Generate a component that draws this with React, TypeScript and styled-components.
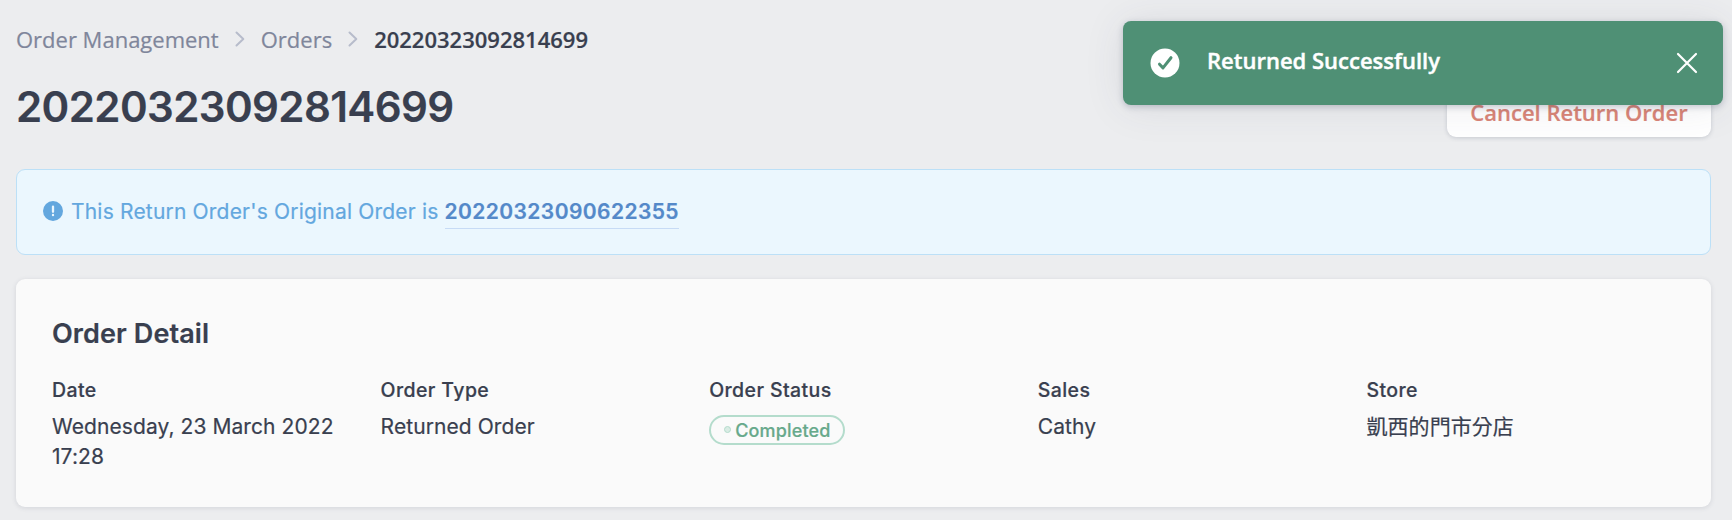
import React from "react";
import styled, { createGlobalStyle } from "styled-components";

const GlobalStyle = createGlobalStyle`
  *, *::before, *::after { box-sizing: border-box; }
  body {
    margin: 0;
    background: #ecedef;
    color: #393f4f;
    font-family: Inter, "Noto Sans CJK TC", sans-serif;
    -webkit-font-smoothing: antialiased;
    -webkit-text-stroke: 0.2px;
  }
`;

const Page = styled.main`
  position: relative;
  height: 520px;
  padding: 24px 21px 0 16px;
  overflow: hidden;
`;

const Breadcrumb = styled.nav`
  display: flex;
  align-items: center;
  height: 30px;
  font: 400 22px/30px "Open Sans", sans-serif;
`;

const Crumb = styled.span<{ $current?: boolean }>`
  color: ${(p) => (p.$current ? "#393f4f" : "#7f869b")};
  font-weight: ${(p) => (p.$current ? 600 : 400)};
  white-space: nowrap;
`;

const Separator = styled.svg`
  width: 10px;
  height: 16px;
  margin: 0 16px 1px;
  flex: none;
`;

const Header = styled.header`
  display: flex;
  justify-content: space-between;
  align-items: flex-start;
  height: 115px;
  padding-top: 25px;
`;

const Title = styled.h1`
  margin: 0;
  font-size: 42px;
  line-height: 56px;
  font-weight: 600;
  letter-spacing: -0.58px;
`;

const CancelButton = styled.button`
  width: 264px;
  height: 56px;
  margin-top: 2px;
  padding: 5px 0 0;
  border: 0;
  border-radius: 9px;
  background: #fff;
  box-shadow: 0 1px 4px rgba(57, 63, 90, 0.2);
  color: #da8577;
  font: 600 22px/30px "Open Sans", sans-serif;
`;

const Notice = styled.section`
  display: flex;
  align-items: center;
  height: 86px;
  padding: 0 26px;
  border: 1px solid #bce0f7;
  border-radius: 9px;
  background: #ebf7fe;
  color: #63a7de;
  font-size: 21px;
  line-height: 30px;
  letter-spacing: 0.19px;
`;

const NoticeIcon = styled.svg`
  width: 20px;
  height: 20px;
  margin: 0 8px 3px 0;
  flex: none;
`;

const OrderLink = styled.a`
  margin: 2px 0 0 6px;
  padding-bottom: 1px;
  border-bottom: 1px solid #c7dbf5;
  color: #5489c9;
  font-weight: 600;
  letter-spacing: 0.42px;
`;

const Card = styled.section`
  height: 228px;
  margin-top: 24px;
  padding: 37px 36px 0;
  border-radius: 9px;
  background: #fafafa;
  box-shadow: 0 1px 5px rgba(57, 63, 90, 0.14);
`;

const CardTitle = styled.h2`
  margin: 0 0 23px;
  font-size: 27px;
  line-height: 36px;
  font-weight: 600;
  letter-spacing: 0.1px;
`;

const Fields = styled.dl`
  display: grid;
  grid-template-columns: repeat(5, 1fr);
  column-gap: 20px;
  margin: 0;
`;

const Label = styled.dt`
  font-size: 19.5px;
  line-height: 30px;
  font-weight: 500;
  letter-spacing: 0.4px;
`;

const Value = styled.dd`
  margin: 7px 0 0;
  font-size: 21px;
  line-height: 30px;
  letter-spacing: 0.08px;
`;

const Status = styled.span`
  display: flex;
  align-items: center;
  width: 136px;
  height: 30px;
  margin-top: 10px;
  padding: 1px 0 0 13px;
  border: 2px solid #b4dccc;
  border-radius: 15px;
  color: #67a98b;
  font-size: 18px;
  font-weight: 500;
  line-height: 26px;
  letter-spacing: 0.15px;
`;

const Dot = styled.i`
  width: 7px;
  height: 7px;
  margin: 0 4px 2px 0;
  border: 1px solid #b4dccc;
  border-radius: 50%;
  background: #d9ece4;
`;

const Toast = styled.div`
  position: absolute;
  top: 21px;
  right: 9px;
  display: flex;
  align-items: center;
  width: 600px;
  height: 84px;
  padding: 0 25px 0 27px;
  border-radius: 8px;
  background: #4f9075;
  box-shadow: 0 2px 6px rgba(57, 63, 90, 0.25), 0 2px 40px rgba(57, 63, 90, 0.1);
  color: #fff;
`;

const ToastIcon = styled.svg`
  width: 30px;
  height: 30px;
  flex: none;
`;

const Message = styled.span`
  flex: 1;
  padding: 0 0 6px 27px;
  font: 600 22px/30px "Open Sans", sans-serif;
  -webkit-text-stroke: 0.4px;
`;

const Close = styled.button`
  display: flex;
  padding: 0;
  border: 0;
  background: none;
  color: inherit;
`;

const Chevron = () => (
  <Separator viewBox="0 0 10 16" fill="none" stroke="#b7bccb" strokeWidth="2" strokeLinecap="round" strokeLinejoin="round">
    <path d="M1.5 1.5 8.3 8l-6.8 6.5" />
  </Separator>
);

const fields: { label: string; value: React.ReactNode }[] = [
  { label: "Date", value: "Wednesday, 23 March 2022 17:28" },
  { label: "Order Type", value: "Returned Order" },
  { label: "Order Status", value: <Status><Dot />Completed</Status> },
  { label: "Sales", value: "Cathy" },
  { label: "Store", value: "凱西的門市分店" },
];

export default function App() {
  return (
    <Page>
      <GlobalStyle />
      <Breadcrumb>
        <Crumb>Order Management</Crumb>
        <Chevron />
        <Crumb>Orders</Crumb>
        <Chevron />
        <Crumb $current>20220323092814699</Crumb>
      </Breadcrumb>
      <Header>
        <Title>20220323092814699</Title>
        <CancelButton>Cancel Return Order</CancelButton>
      </Header>
      <Notice>
        <NoticeIcon viewBox="0 0 20 20">
          <circle cx="10" cy="10" r="10" fill="#63a7de" />
          <path d="M10 5.6v5.2M10 14v.2" stroke="#ebf7fe" strokeWidth="2.3" strokeLinecap="round" />
        </NoticeIcon>
        <span>This Return Order's Original Order is</span>
        <OrderLink>20220323090622355</OrderLink>
      </Notice>
      <Card>
        <CardTitle>Order Detail</CardTitle>
        <Fields>
          {fields.map((f) => (
            <div key={f.label}>
              <Label>{f.label}</Label>
              <Value>{f.value}</Value>
            </div>
          ))}
        </Fields>
      </Card>
      <Toast role="status">
        <ToastIcon viewBox="0 0 30 30" fill="none">
          <circle cx="15" cy="15" r="14.5" fill="#fff" />
          <path d="m9.5 16.2 3.5 3.7 8-10.2" stroke="#4f9075" strokeWidth="3" strokeLinecap="round" strokeLinejoin="round" />
        </ToastIcon>
        <Message>Returned Successfully</Message>
        <Close aria-label="Close">
          <svg width="22" height="22" viewBox="0 0 22 22" stroke="#fff" strokeWidth="2.2" strokeLinecap="round">
            <path d="m2 2 18 18M20 2 2 20" />
          </svg>
        </Close>
      </Toast>
    </Page>
  );
}
